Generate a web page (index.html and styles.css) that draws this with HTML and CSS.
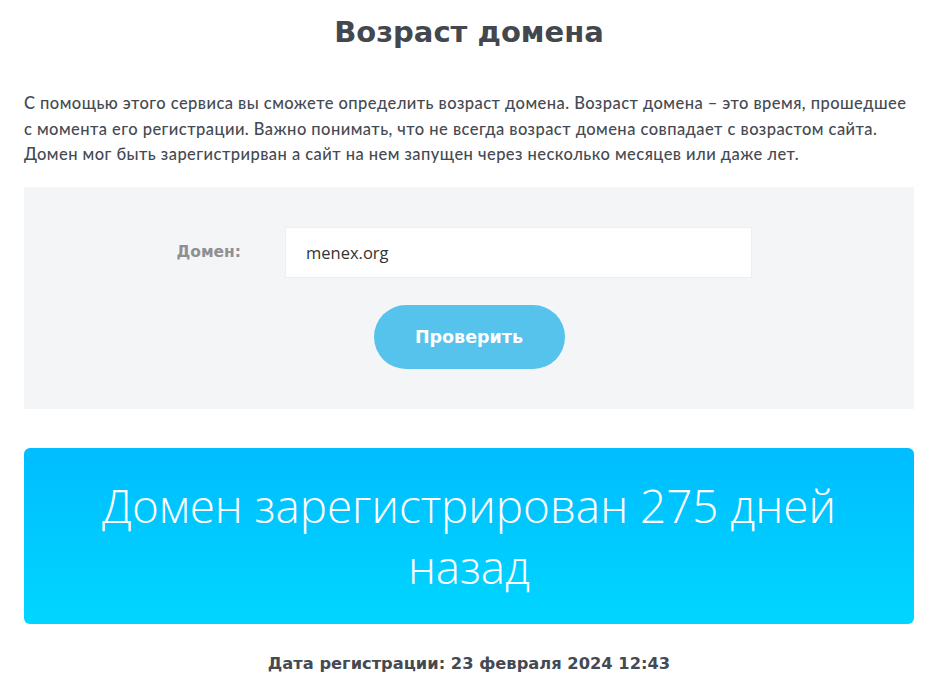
FILE: index.html
```html
<!DOCTYPE html>
<html lang="ru">
<head>
<meta charset="utf-8">
<title>Возраст домена</title>
<link rel="stylesheet" href="styles.css">
</head>
<body>
<main class="page">
  <h1 class="title">Возраст домена</h1>
  <p class="intro">С помощью этого сервиса вы сможете определить возраст домена. Возраст домена – это время, прошедшее с момента его регистрации. Важно понимать, что не всегда возраст домена совпадает с возрастом сайта. Домен мог быть зарегистрирван а сайт на нем запущен через несколько месяцев или даже лет.</p>
  <form class="check-form">
    <div class="field">
      <label class="field-label" for="domain">Домен:</label>
      <input class="field-input" id="domain" type="text" value="menex.org">
    </div>
    <button class="btn" type="button">Проверить</button>
  </form>
  <div class="result">Домен зарегистрирован 275 дней назад</div>
  <p class="reg-date">Дата регистрации: 23 февраля 2024 12:43</p>
</main>
</body>
</html>
```
FILE: styles.css
```css
* { box-sizing: border-box; }
html, body { margin: 0; padding: 0; background: #fff; }
body { font-family: "Open Sans", "DejaVu Sans", sans-serif; color: #454a52; }
.page { width: 890px; margin: 0 24px 0 24px; }
.title {
  margin: 0;
  padding-top: 13px;
  height: 62px;
  text-align: center;
  font-family: "DejaVu Sans", sans-serif;
  font-weight: bold;
  font-size: 29px;
  line-height: 38px;
  color: #43474e;
}
.intro {
  margin: 29px 0 19px 0;
  font-family: "Lato", sans-serif;
  font-size: 16.5px;
  letter-spacing: 0.45px;
  line-height: 25.5px;
  font-weight: 500;
  color: #454a52;
}
.check-form {
  background: #f3f5f6;
  height: 222px;
  padding-top: 40px;
  display: flex;
  flex-direction: column;
  align-items: center;
}
.field {
  display: flex;
  align-items: center;
  width: 100%;
}
.field-label {
  width: 261px;
  padding-right: 44px;
  text-align: right;
  font-family: "DejaVu Sans", sans-serif;
  font-weight: bold;
  font-size: 15.5px;
  color: #8e9093;
}
.field-input {
  width: 467px;
  height: 51px;
  border: 1px solid #eceef0;
  background: #fff;
  padding: 0 20px;
  font-family: "Open Sans", sans-serif;
  font-size: 16.5px;
  color: #333;
  outline: none;
}
.btn {
  margin-top: 27px;
  width: 191px;
  height: 64px;
  border: none;
  border-radius: 32px;
  background: #55c3eb;
  color: #fff;
  font-family: "DejaVu Sans", sans-serif;
  font-weight: bold;
  font-size: 17.5px;
}
.result {
  margin-top: 39px;
  height: 176px;
  border-radius: 6px;
  background: linear-gradient(to bottom, #00bdff, #00d6ff);
  color: #fff;
  text-align: center;
  font-family: "Open Sans", sans-serif;
  font-weight: 300;
  font-size: 45.8px;
  line-height: 61px;
  padding: 27px 40px 0 40px;
}
.reg-date {
  margin: 30px 0 0 0;
  text-align: center;
  font-family: "DejaVu Sans", sans-serif;
  font-weight: bold;
  font-size: 16.3px;
  color: #454a52;
}
```
